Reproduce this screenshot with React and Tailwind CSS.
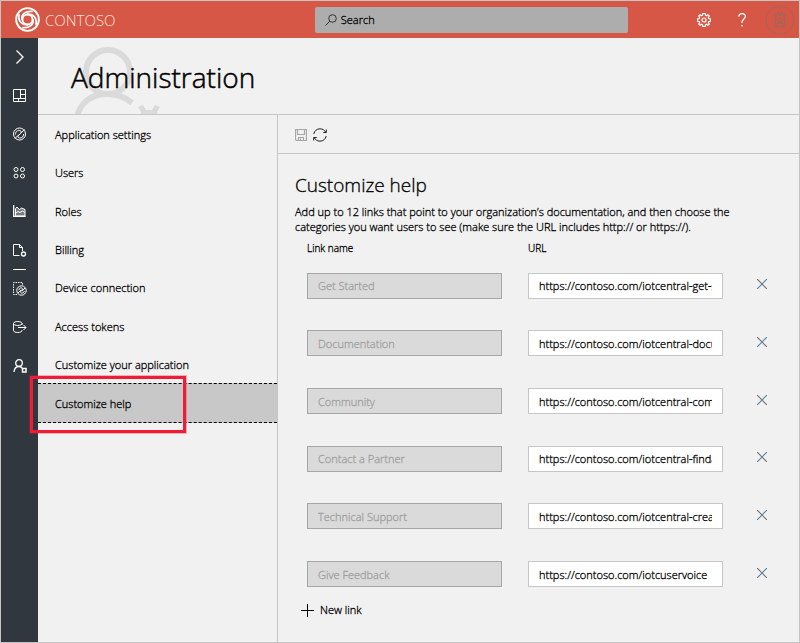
const settings = [
  'Application settings',
  'Users',
  'Roles',
  'Billing',
  'Device connection',
  'Access tokens',
  'Customize your application',
];

const links = [
  { name: 'Get Started', url: 'https://contoso.com/iotcentral-get-started' },
  { name: 'Documentation', url: 'https://contoso.com/iotcentral-documentation' },
  { name: 'Community', url: 'https://contoso.com/iotcentral-community' },
  { name: 'Contact a Partner', url: 'https://contoso.com/iotcentral-findapartner' },
  { name: 'Technical Support', url: 'https://contoso.com/iotcentral-createticket' },
  { name: 'Give Feedback', url: 'https://contoso.com/iotcuservoice' },
];

function Icon({ children, size = 14, className = '' }) {
  return (
    <svg
      width={size}
      height={size}
      viewBox={`0 0 ${size} ${size}`}
      fill="none"
      stroke="currentColor"
      strokeWidth="1"
      className={className}
      aria-hidden="true"
    >
      {children}
    </svg>
  );
}

const rail = [
  {
    label: 'Expand',
    icon: <path d="M3.500 .5 10 7 3.500 13.500" strokeWidth="1.300" />,
  },
  {
    label: 'Dashboard',
    icon: <path d="M.5.5h12v12H.5zM.5 9.500h12M7.500.5v9M7.500 5.500h5M5.500 9.500v3" />,
  },
  {
    label: 'Devices',
    icon: (
      <>
        <circle cx="6.500" cy="7" r="6" />
        <path d="M2 11.500 6 7.500M7.500 6.500 11.500 2.500M2.500 7.500C2.500 4 5 3 7 3.500c1.500.5 1.500 2 .5 3L5.500 8.500c-1 1-.5 2.500 1 2.500 2.500.3 4.300-1.500 4-4" />
      </>
    ),
  },
  {
    label: 'Device groups',
    icon: (
      <>
        <circle cx="3" cy="3.500" r="2" />
        <circle cx="9.500" cy="3.500" r="2" />
        <circle cx="3" cy="10" r="2" />
        <circle cx="9.500" cy="10" r="2" />
      </>
    ),
  },
  {
    label: 'Analytics',
    icon: (
      <>
        <path d="M.7 1v11.300h12" strokeWidth="1.300" />
        <path d="M2.500 4.500 4 3l2.500 2.500 2-1.500 3.500 1.500v6.500H2.500z" fill="currentColor" fillOpacity=".35" />
        <path d="M3 9l2-1.500 2 1 2.500-1.500 2 1.500" />
      </>
    ),
  },
  {
    label: 'Jobs',
    icon: (
      <>
        <path d="M6.500 12.500H.5V1.500h6l3 3V8M6.500 1.500v3h3" />
        <circle cx="10.500" cy="11" r="2" strokeWidth="1.300" />
      </>
    ),
  },
  {
    label: 'Device templates',
    icon: (
      <>
        <path d="M4 12.500H.5V.5h9v3" strokeDasharray="1.500 1" />
        <circle cx="8.500" cy="8.500" r="4.700" />
        <path d="m5 11 3-3M9 9l3-3M5.800 8c.5-2 2-2.500 3.200-2 1 .5.500 1.500-.5 2.500s-1.500 2 0 2.500 2.500-.5 2.800-2" />
      </>
    ),
  },
  {
    label: 'Data export',
    icon: (
      <>
        <path d="M9 5V3.500c0-1.200-2-2-4.200-2S.5 2.300.5 3.500v7c0 1.200 2 2 4.300 2S9 11.700 9 10.500V10M.5 3.500c0 1.200 2 2 4.300 2S9 4.700 9 3.500" />
        <path d="M5 7.500h8M10.500 5l2.500 2.500-2.500 2.500" />
      </>
    ),
  },
  {
    label: 'Administration',
    icon: (
      <>
        <circle cx="6" cy="4" r="3.300" strokeWidth="1.300" />
        <path d="M1 13c.3-3.500 2.500-5.500 5-5.500 1.500 0 2.700.8 3.500 2" strokeWidth="1.300" />
        <path d="M9.500 9.500h3.500v3.500H9.500z" strokeWidth="1.500" />
      </>
    ),
  },
];

function Logo() {
  return (
    <svg width="25" height="25" viewBox="0 0 24 24" fill="none" stroke="white" aria-hidden="true">
      <circle cx="12" cy="12" r="10.900" strokeWidth="1.800" />
      <circle cx="12" cy="12" r="4.800" strokeWidth="1.700" />
      <path
        d="M6.800 12.500C5.500 7.500 10 3.300 17 4.300M17.200 11.500C18.500 16.500 14 20.700 7 19.700M4 7c-1.500 6 2 10.500 8.500 10M20 17c1.500-6-2-10.500-8.500-10"
        strokeWidth="1.700"
      />
    </svg>
  );
}

function Header() {
  return (
    <header className="flex h-[37px] items-center bg-[#d65745] text-white">
      <div className="flex-11">
        <a href="#home" className="ml-[14px] flex w-fit items-center gap-[5px]">
          <Logo />
          <span className="text-[15px] leading-5 text-[#fbe3df] [-webkit-text-stroke:0]">CONTOSO</span>
        </a>
      </div>
      <label className="flex h-[26px] w-[313px] items-center gap-1 rounded-[2px] bg-[#adadad] pl-2.5 text-[#333]">
        <Icon size={12}>
          <circle cx="7.500" cy="4.500" r="3.800" />
          <path d="M4.800 7.200.5 11.500" />
        </Icon>
        <input
          type="search"
          placeholder="Search"
          aria-label="Search"
          className="min-w-0 flex-1 bg-transparent text-[11px] leading-4 text-black outline-none placeholder:text-black"
        />
      </label>
      <div className="flex flex-6 items-center justify-end">
        <button type="button" aria-label="Settings" className="flex h-6 w-[38px] items-center justify-center">
          <Icon size={14}>
            <path
              d="M5.700.7h2.600l.3 1.700 1 .4L11 1.800 12.300 3.100l-1 1.400.4 1 1.700.3v2.500l-1.700.3-.4 1 1 1.400L11 12.300l-1.400-1-1 .4-.3 1.700H5.700l-.3-1.700-1-.4-1.400 1L1.700 11l1-1.400-.4-1L.6 8.300V5.800l1.700-.3.400-1-1-1.400L3 1.800l1.400 1 1-.4z"
              strokeWidth="1.200"
            />
            <circle cx="7" cy="7" r="2" strokeWidth="1.200" />
          </Icon>
        </button>
        <button type="button" aria-label="Help" className="flex h-6 w-[38px] items-center justify-center">
          <Icon size={14}>
            <path d="M3.700 3.700C3.900 1.700 5.200.7 7 .7s3.300 1.100 3.300 2.900c0 2.400-3.300 3-3.300 5.400v1M7 12v1.500" strokeWidth="1.300" />
          </Icon>
        </button>
        <button type="button" aria-label="Account" className="flex h-[30px] w-[38px] items-center justify-center text-[#a2655b]">
          <Icon size={30}>
            <circle cx="15" cy="15" r="14" />
            <path d="M10.500 9.500h9v12h-9zM12.500 6.500l2.500 4 2.500-4M12.500 19.500c0-3 5-3 5 0" strokeWidth="1.400" />
            <circle cx="15" cy="15" r="1.700" />
          </Icon>
        </button>
      </div>
    </header>
  );
}

function Rail() {
  return (
    <nav aria-label="Main" className="w-[37px] shrink-0 bg-[#31373e] text-white">
      <ul className="grid h-[347px] auto-rows-fr">
        {rail.map((item) => (
          <li key={item.label} className="relative flex items-center justify-center">
            {item.label === 'Device templates' && (
              <span className="absolute top-0 h-px w-[13px] bg-white" />
            )}
            <button type="button" aria-label={item.label}>
              <Icon>{item.icon}</Icon>
            </button>
          </li>
        ))}
      </ul>
    </nav>
  );
}

function SettingsNav() {
  return (
    <nav aria-label="Administration" className="w-[240px] shrink-0 border-r border-[#c6c6c6] text-[11px] leading-4">
      <ul className="-mb-px grid h-[269px] auto-rows-fr pt-px">
        {settings.map((item) => (
          <li key={item} className="flex items-center">
            <a href="#settings" className="flex-1 pl-[17px]">{item}</a>
          </li>
        ))}
      </ul>
      <div className="relative">
        <a
          href="#help"
          aria-current="page"
          className="flex h-10 items-center border-y border-dashed border-black bg-[#c8c8c8] pt-0.5 pl-[17px]"
        >
          Customize help
        </a>
        <div className="pointer-events-none absolute -top-[7px] -left-2 h-[57px] w-[156px] border-3 border-[#ee1c35] ring-1 ring-[#ee1c35]/30" />
      </div>
    </nav>
  );
}

function HelpForm() {
  return (
    <form className="pt-[19px] pr-6 pl-[17px]">
      <h2 className="text-[19px] leading-6">Customize help</h2>
      <p className="mt-[7px] max-w-[460px] text-[11px] leading-[15px]">
        Add up to 12 links that point to your organization’s documentation, and then choose the
        categories you want users to see (make sure the URL includes http:// or https://).
      </p>
      <div className="pl-3">
        <div className="mt-1.5 grid grid-cols-[1fr_1fr_26px] gap-x-[26px] text-[10px] leading-4">
          <span id="col-name">Link name</span>
          <span id="col-url">URL</span>
        </div>
        <ul className="-mb-px grid h-[347px] auto-rows-fr pt-px text-[11px]">
          {links.map((link) => (
            <li key={link.name} className="grid grid-cols-[1fr_1fr_26px] items-center gap-x-[26px]">
              <input
                type="text"
                disabled
                defaultValue={link.name}
                aria-labelledby="col-name"
                className="h-[26px] min-w-0 border border-[#a6a6a6] bg-[#dadada] px-2.5 text-[#a0a0a0]"
              />
              <input
                type="text"
                defaultValue={link.url}
                aria-labelledby="col-url"
                className="h-[26px] min-w-0 border border-[#c6c6c6] bg-white px-2.5"
              />
              <button type="button" aria-label={`Remove ${link.name}`} className="flex justify-center pb-[3px]">
                <Icon size={10}>
                  <path d="m0 0 10 10" stroke="#7d6f6a" strokeWidth="1.200" />
                  <path d="M10 0 0 10" stroke="#4f86ab" strokeWidth="1.200" />
                </Icon>
              </button>
            </li>
          ))}
        </ul>
      </div>
      <button type="button" className="ml-1.5 flex items-center gap-1.5 text-[11px] leading-4">
        <Icon size={13}>
          <path d="M6.500 0v13M0 6.500h13" />
        </Icon>
        New link
      </button>
    </form>
  );
}

export default function App() {
  return (
    <div className="flex min-h-screen flex-col border border-[#c4c4c4] bg-[#f1f1f1] font-['Open_Sans','Noto_Sans',sans-serif] font-light text-black [-webkit-text-stroke:0.3px]">
      <Header />
      <div className="flex flex-1">
        <Rail />
        <div className="flex min-w-0 flex-1 flex-col">
          <div className="relative flex h-[77px] items-center overflow-hidden border-b border-[#c6c6c6] pt-0.5 pl-[33px]">
            <svg
              width="90"
              height="68"
              viewBox="0 0 90 68"
              fill="none"
              stroke="#dadada"
              strokeWidth="6"
              className="absolute top-[9px] left-9"
              aria-hidden="true"
            >
              <circle cx="34" cy="25" r="22" />
              <path d="M3 70C6 56 17 47 33 47c10 0 18 3 25 9" />
              <path d="M64 60l5-2 3 5h6l3-5 5 2-3 5 1 4H67v-4z" fill="#dadada" stroke="none" />
            </svg>
            <h1 className="relative text-[28px] leading-9 [-webkit-text-stroke:0.5px]">Administration</h1>
          </div>
          <div className="flex flex-1">
            <SettingsNav />
            <main className="min-w-0 flex-1">
              <div className="flex h-[39px] items-center gap-1.5 border-b border-[#c6c6c6] pt-0.5 pl-[17px]">
                <button type="button" aria-label="Save" disabled className="text-[#a6a6a6]">
                  <Icon size={12}>
                    <path d="M.5.5h11v11h-10l-1-1zM2.500.5v5h7v-5M3.500 11.500v-3h5v3M5.500 9.500v2" strokeWidth="1.200" />
                  </Icon>
                </button>
                <button type="button" aria-label="Refresh" className="text-[#222]">
                  <Icon>
                    <path d="M.8 6C1.300 3 3.800.8 7 .8c2.500 0 4.500 1.200 5.700 3.400M13.200 8c-.5 3-3 5.200-6.200 5.200-2.500 0-4.500-1.200-5.700-3.400M13.300 1.500v3h-3M.7 12.500v-3h3" />
                  </Icon>
                </button>
              </div>
              <HelpForm />
            </main>
          </div>
        </div>
      </div>
    </div>
  );
}
